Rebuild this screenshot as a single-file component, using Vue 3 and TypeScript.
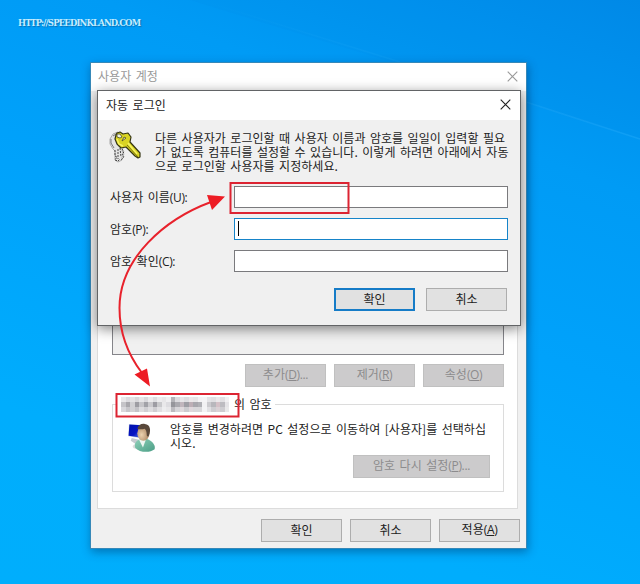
<script setup lang="ts">
interface ActionButton {
  label: string
  accessKey?: string
  suffix?: string
  focused?: boolean
}

interface Field {
  label: string
  key: string
  active?: boolean
}

const introLines: string[] = [
  '다른 사용자가 로그인할 때 사용자 이름과 암호를 일일이 입력할 필요',
  '가 없도록 컴퓨터를 설정할 수 있습니다. 이렇게 하려면 아래에서 자동',
  '으로 로그인할 사용자를 지정하세요.',
]

const fields: Field[] = [
  { label: '사용자 이름', key: 'U' },
  { label: '암호', key: 'P', active: true },
  { label: '암호 확인', key: 'C' },
]

const listActions: ActionButton[] = [
  { label: '추가', accessKey: 'D', suffix: '...' },
  { label: '제거', accessKey: 'R' },
  { label: '속성', accessKey: 'O' },
]

const footerActions: ActionButton[] = [
  { label: '확인' },
  { label: '취소' },
  { label: '적용', accessKey: 'A' },
]

const dialogActions: ActionButton[] = [
  { label: '확인', focused: true },
  { label: '취소' },
]

// Shades of the pixelated account name, column by column.
const mosaic: string[][] = [
  ['#e9e8ea', '#dcdbdf', '#e3e2e4', '#d8d7da', '#e6e5e7', '#d9d8dc', '#ebeaec', '#dddde0', '#ecebed', '#e7e6e8', '#f0eff1', '#b4b4b9', '#dbdade', '#e7e5e8', '#dedde1', '#ebe7e9', '#e6e5e7', '#f3f2f4', '#f5f4f6', '#e4e3e6', '#e0dfe2', '#ebe8ea', '#e1e0e3', '#f1f0f2'],
  ['#c5c4c8', '#a9a8ad', '#d1d0d3', '#9e9da3', '#c6c5c9', '#a2a2a8', '#cac9cd', '#9d9ca3', '#c9c9cc', '#e9e8ea', '#dddce0', '#95959b', '#aaa9af', '#c1b6bd', '#9f9ea5', '#bdafb6', '#a8a7ad', '#b0b0b5', '#f2f1f3', '#cccbcf', '#b8b7bc', '#d4c1c7', '#bdbcc1', '#e5e4e7'],
  ['#d9d8dc', '#c7c6ca', '#d2d1d4', '#c4c3c7', '#dddcdf', '#d0cfd3', '#dedde0', '#cfced2', '#e0dfe2', '#ededef', '#e8e7e9', '#bcbbc0', '#d6d5d9', '#dfd9dd', '#cccbcf', '#dfd7dc', '#d8d7da', '#d8d7da', '#f3f3f5', '#e1e0e3', '#cecdd1', '#dad1d5', '#cecdd1', '#e9e9ea'],
]
</script>

<template>
  <main class="desktop">
    <svg class="wallpaper" viewBox="0 0 640 584" aria-hidden="true">
      <defs>
        <linearGradient id="beam" x1="0" y1="0" x2="1" y2="0">
          <stop offset="0" stop-color="#45bdff" stop-opacity="0" />
          <stop offset="1" stop-color="#45bdff" stop-opacity=".22" />
        </linearGradient>
      </defs>
      <path d="M190 0L640 138V0Z" fill="#0079d8" opacity=".06" />
      <path d="M200 0L400 62M526 102L640 139" fill="none" stroke="url(#beam)" stroke-width="1.5" />
    </svg>

    <p class="watermark">http://speedinkland.com</p>

    <section class="window accounts">
      <header class="titlebar muted">
        <h1>사용자 계정</h1>
        <svg class="close" viewBox="0 0 11 11"><path d="M.7.7l9.6 9.6M10.3.7L.7 10.3" /></svg>
      </header>
      <div class="tab-page">
        <div class="user-list"></div>
        <div class="row list-actions">
          <button v-for="b in listActions" :key="b.label" class="btn" disabled>
            {{ b.label }}<span class="latin">(<u>{{ b.accessKey }}</u>){{ b.suffix }}</span>
          </button>
        </div>
        <section class="group">
          <h2 class="legend">
            <span class="account-name">
              <span class="mosaic">
                <span v-for="(line, r) in mosaic" :key="r" class="mosaic-row">
                  <i v-for="(c, i) in line" :key="i" :style="{ background: c }"></i>
                </span>
              </span>
            </span>
            <span class="legend-text">의 암호</span>
          </h2>
          <div class="group-body">
            <svg class="user-icon" viewBox="0 0 32 32">
              <defs>
                <linearGradient id="screen" x1="0" y1="0" x2="1" y2="1">
                  <stop offset="0" stop-color="#0011a8" />
                  <stop offset=".55" stop-color="#0714c4" />
                  <stop offset="1" stop-color="#6793ee" />
                </linearGradient>
                <radialGradient id="face" cx=".35" cy=".6" r=".6">
                  <stop offset="0" stop-color="#ecd3b0" />
                  <stop offset="1" stop-color="#b08a66" />
                </radialGradient>
                <linearGradient id="shirt" x1="0" y1="0" x2="1" y2="1">
                  <stop offset="0" stop-color="#8ed0b8" />
                  <stop offset="1" stop-color="#4b9e86" />
                </linearGradient>
              </defs>
              <ellipse cx="18" cy="25" rx="12" ry="4" fill="#777" opacity=".25" />
              <path d="M5 16l9 2 1 4-5 1-6-4z" fill="#c6cbd0" />
              <path d="M2 1l15 1 1 15L1 14z" fill="#dbe4ee" />
              <path d="M2.500 1.500l13.500 1 .8 13.500L1.700 13.500z" fill="url(#screen)" />
              <path d="M8.500 26c-1-5 2-8 7-9h6c5 2 9 6 8 11-5 4-16 4-21-2z" fill="url(#shirt)" />
              <path d="M13 18l4 8 3-8z" fill="#eef6f1" />
              <ellipse cx="17.500" cy="11" rx="6.500" ry="8" fill="url(#face)" />
              <path d="M11 6c1-4 4-5.500 8-5 6 .5 7 7 4 13-1 1-2 0-2-2 0-3-1-5-2-6-3 1-5 1-8 0z" fill="#59483a" />
            </svg>
            <p class="group-text">암호를 변경하려면 PC 설정으로 이동하여 [사용자]를 선택하십<br />시오.</p>
          </div>
          <button class="btn reset" disabled>암호 다시 설정<span class="latin">(<u>P</u>)...</span></button>
        </section>
      </div>
      <footer class="row footer-actions">
        <button v-for="b in footerActions" :key="b.label" class="btn">
          {{ b.label }}<span v-if="b.accessKey" class="latin">(<u>{{ b.accessKey }}</u>)</span>
        </button>
      </footer>
    </section>

    <section class="window login">
      <header class="titlebar">
        <h1>자동 로그인</h1>
        <svg class="close" viewBox="0 0 11 11"><path d="M.7.7l9.6 9.6M10.3.7L.7 10.3" /></svg>
      </header>
      <div class="intro">
        <svg class="keys-icon" viewBox="0 0 32 32">
          <path d="M9 1L4 3 1 8v5l3 5 2 2v9l3 2 4-2v-3l2-3-2-3 1-3-3-3-3-3V5z" fill="#e4e4e4" stroke="#aaa" />
          <path d="M6 19v6l2 1-2 3 3 1 2-2M13 18l2 3-2 2 2 3-3 3M9 18v10M11 17l1 9" fill="none" stroke="#484848" stroke-dasharray="2 1" />
          <path d="M4 5l3-2M2 8v4l3 5" fill="none" stroke="#777" />
          <path d="M8 2l3-1 3 2 5-1 3 4-1 5 10 11v4l-2 1-3-2-9-9-5 1-4-4-2-5 1-4z" fill="#d9d422" stroke="#343414" stroke-width="1.200" stroke-linejoin="round" />
          <path d="M8 8l2 5 4 2M19 12l9 11" fill="none" stroke="#f7f361" stroke-width="1.500" />
          <path d="M18 14l11 12" stroke="#7b7610" fill="none" />
          <path d="M8 3h3l2 3-2 1-3-1zM15 6l-2 4 4-3z" fill="#f1f1e2" stroke="#4d4d22" stroke-width=".8" />
        </svg>
        <p class="intro-text"><span v-for="line in introLines" :key="line">{{ line }}</span></p>
      </div>
      <div class="form">
        <label v-for="f in fields" :key="f.key" class="field">
          <span class="field-label">{{ f.label }}<span class="latin">({{ f.key }}):</span></span>
          <span class="input" :class="{ active: f.active }"><span v-if="f.active" class="caret"></span></span>
        </label>
      </div>
      <footer class="row dialog-actions">
        <button v-for="b in dialogActions" :key="b.label" class="btn" :class="{ focused: b.focused }">{{ b.label }}</button>
      </footer>
    </section>

    <svg class="annotations" viewBox="0 0 640 584" aria-hidden="true">
      <g fill="none" stroke="#dc2432" stroke-width="2">
        <rect x="230.500" y="183" width="118" height="30" />
        <rect x="116.500" y="394" width="122" height="22.500" />
        <path d="M211 202C165 219 119.500 258 119.500 308C119.500 334 129 356 142 373" stroke="#e8222c" />
      </g>
      <path d="M225 196.500L207 195L212 210ZM150 386.500L134.500 374.500L147 368.500Z" fill="#ed1c24" />
    </svg>
  </main>
</template>

<style>
body {
  margin: 0;
}
</style>

<style scoped>
.desktop {
  position: relative;
  width: 640px;
  height: 584px;
  overflow: hidden;
  background: linear-gradient(200deg, #008be8 0%, #009bf5 24%, #00a2fb 48%, #00adfd 78%, #00aefc 100%);
  color: #222;
  font-family: "Noto Sans CJK KR", "Noto Sans", sans-serif;
  font-size: 12px;
  line-height: 14px;
  letter-spacing: 0.04px;
  word-spacing: 1.7px;
}

.wallpaper,
.annotations {
  position: absolute;
  inset: 0;
  width: 640px;
  height: 584px;
}

.watermark {
  position: absolute;
  left: 18px;
  top: 15px;
  margin: 0;
  color: #c5edff;
  font: bold 8.5px/16px "DejaVu Serif", serif;
  letter-spacing: -0.85px;
  text-transform: uppercase;
  text-shadow: 1px 1px 1px #0873b8;
}

.window {
  position: absolute;
  box-sizing: border-box;
  display: flex;
  flex-direction: column;
  background: #f0f0f0;
}

.accounts {
  left: 90px;
  top: 62px;
  width: 437px;
  height: 487px;
  border: 1px solid #3688b8;
  box-shadow: 1px 3px 9px rgba(0, 45, 95, 0.45);
}

.login {
  left: 97px;
  top: 90px;
  width: 424px;
  height: 236px;
  border: 1px solid #626466;
  box-shadow: 0 3px 12px rgba(0, 0, 0, 0.48);
}

.titlebar {
  display: flex;
  flex: none;
  align-items: center;
  justify-content: space-between;
  box-sizing: border-box;
  height: 29px;
  padding: 0 9px 2px 8px;
  background: #fff;
}

.titlebar.muted {
  height: 28px;
  padding: 0 8px 2px 7px;
  color: #999;
}

h1,
h2 {
  margin: 0;
  font-size: 12px;
  font-weight: 400;
}

.close {
  width: 11px;
  height: 11px;
  fill: none;
  stroke: #222;
  stroke-width: 1.1;
}

.muted .close {
  stroke: #999;
}

.tab-page {
  box-sizing: border-box;
  height: 418px;
  margin: 0 8px 0 6px;
  padding: 0 13px 0 14px;
  border: 1px solid #dcdcdc;
  background: #fff;
}

.user-list {
  box-sizing: border-box;
  height: 263px;
  border: 1px solid #85858a;
  background: #f0f0f0;
}

.row {
  display: flex;
  justify-content: flex-end;
}

.list-actions {
  gap: 8px;
  margin-top: 9px;
}

.btn {
  box-sizing: border-box;
  width: 81px;
  height: 23px;
  padding: 0 0 2px;
  border: 1px solid #adadad;
  border-radius: 0;
  background: #e1e1e1;
  color: #222;
  font: inherit;
  letter-spacing: inherit;
  word-spacing: inherit;
  text-align: center;
  white-space: nowrap;
}

.btn:disabled {
  border-color: #c0c0c0;
  background: #cccbcc;
  color: #8c8b8d;
}

.btn.focused {
  border: 2px solid #167cc7;
}

.latin {
  font-family: "Open Sans", "Noto Sans", sans-serif;
  font-size: 12px;
  letter-spacing: -0.35px;
}

.group {
  box-sizing: border-box;
  height: 88px;
  margin-top: 17px;
  border: 1px solid #dcdcdc;
}

.legend {
  display: flex;
  align-items: center;
  width: max-content;
  height: 16px;
  margin: -9px 0 0 4px;
  padding-right: 3px;
  background: #fff;
}

.account-name {
  display: flex;
  width: 117px;
  height: 16px;
  align-items: center;
}

.mosaic {
  margin-left: 4px;
}

.mosaic-row {
  display: flex;
}

.mosaic-row i {
  width: 4.5px;
  height: 5px;
}

.group-body {
  display: flex;
  gap: 13px;
  margin: 10px 0 0 14px;
}

.user-icon {
  width: 30px;
  height: 32px;
}

.group-text {
  margin: 0;
  white-space: nowrap;
}

.reset {
  display: block;
  width: 137px;
  margin: 1px 13px 0 auto;
}

.footer-actions {
  gap: 8px;
  padding: 10px 6px 0 0;
}

.intro {
  display: flex;
  gap: 14px;
  padding: 11px 0 0 11px;
}

.keys-icon {
  width: 32px;
  height: 32px;
}

.intro-text {
  margin: 0 0 1px;
  white-space: nowrap;
}

.intro-text span {
  display: block;
}

.form {
  display: flex;
  flex-direction: column;
  gap: 10px;
  padding: 12px 12px 0;
}

.field {
  display: flex;
  align-items: center;
  justify-content: space-between;
}

.input {
  display: flex;
  box-sizing: border-box;
  width: 274px;
  height: 22px;
  padding: 2px 3px;
  border: 1px solid #7a7a7d;
  background: #fff;
}

.input.active {
  border-color: #1684c9;
}

.caret {
  width: 1px;
  height: 15px;
  background: #000;
}

.dialog-actions {
  gap: 11px;
  padding: 16px 13px 0 0;
}
</style>
